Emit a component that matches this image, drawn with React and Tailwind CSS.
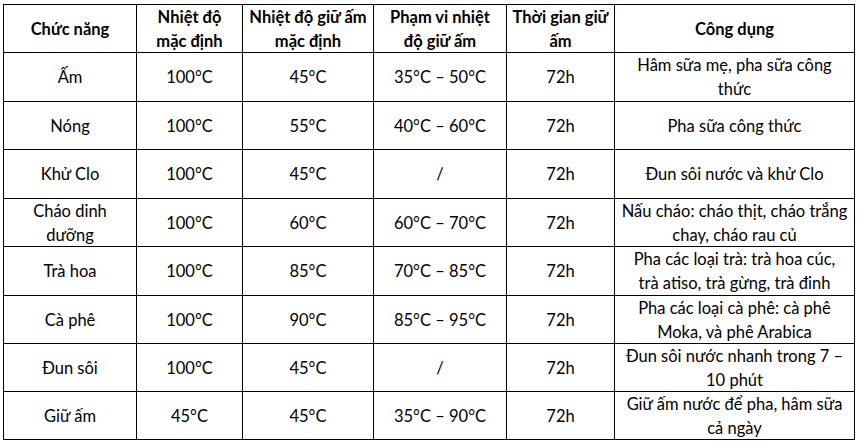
import React from "react";

const header = [
  ["Chức năng"],
  ["Nhiệt độ", "mặc định"],
  ["Nhiệt độ giữ ấm", "mặc định"],
  ["Phạm vi nhiệt", "độ giữ ấm"],
  ["Thời gian giữ", "ấm"],
  ["Công dụng"],
];

const rows = [
  [["Ấm"], ["100°C"], ["45°C"], ["35°C – 50°C"], ["72h"], ["Hâm sữa mẹ, pha sữa công", "thức"]],
  [["Nóng"], ["100°C"], ["55°C"], ["40°C – 60°C"], ["72h"], ["Pha sữa công thức"]],
  [["Khử Clo"], ["100°C"], ["45°C"], ["/"], ["72h"], ["Đun sôi nước và khử Clo"]],
  [["Cháo dinh", "dưỡng"], ["100°C"], ["60°C"], ["60°C – 70°C"], ["72h"], ["Nấu cháo: cháo thịt, cháo trắng", "chay, cháo rau củ"]],
  [["Trà hoa"], ["100°C"], ["85°C"], ["70°C – 85°C"], ["72h"], ["Pha các loại trà: trà hoa cúc,", "trà atiso, trà gừng, trà đinh"]],
  [["Cà phê"], ["100°C"], ["90°C"], ["85°C – 95°C"], ["72h"], ["Pha các loại cà phê: cà phê", "Moka, và phê Arabica"]],
  [["Đun sôi"], ["100°C"], ["45°C"], ["/"], ["72h"], ["Đun sôi nước nhanh trong 7 –", "10 phút"]],
  [["Giữ ấm"], ["45°C"], ["45°C"], ["35°C – 90°C"], ["72h"], ["Giữ ấm nước để pha, hâm sữa", "cả ngày"]],
];

function Cell({ lines, bold }) {
  return (
    <div
      className={`flex flex-col items-center justify-center border-r border-b border-black text-center whitespace-nowrap leading-[24px] ${
        bold ? "font-bold" : ""
      }`}
    >
      {lines.map((l, i) => (
        <span key={i}>{l}</span>
      ))}
    </div>
  );
}

export default function App() {
  return (
    <div
      className="w-[859px] h-[442px] bg-white pt-[4px] pl-[3px]"
      style={{ fontFamily: "Lato, 'Noto Sans', sans-serif" }}
    >
      <div className="grid grid-cols-[133px_106px_131px_133px_108px_240px] grid-rows-[48px_49px_48px_49px_48px_49px_48px_48px_48px] w-[852px] border-l border-t border-black text-[16.5px] text-black">
        {header.map((h, i) => (
          <Cell key={`h-${i}`} lines={h} bold />
        ))}
        {rows.map((r, ri) =>
          r.map((c, ci) => <Cell key={`${ri}-${ci}`} lines={c} />)
        )}
      </div>
    </div>
  );
}
